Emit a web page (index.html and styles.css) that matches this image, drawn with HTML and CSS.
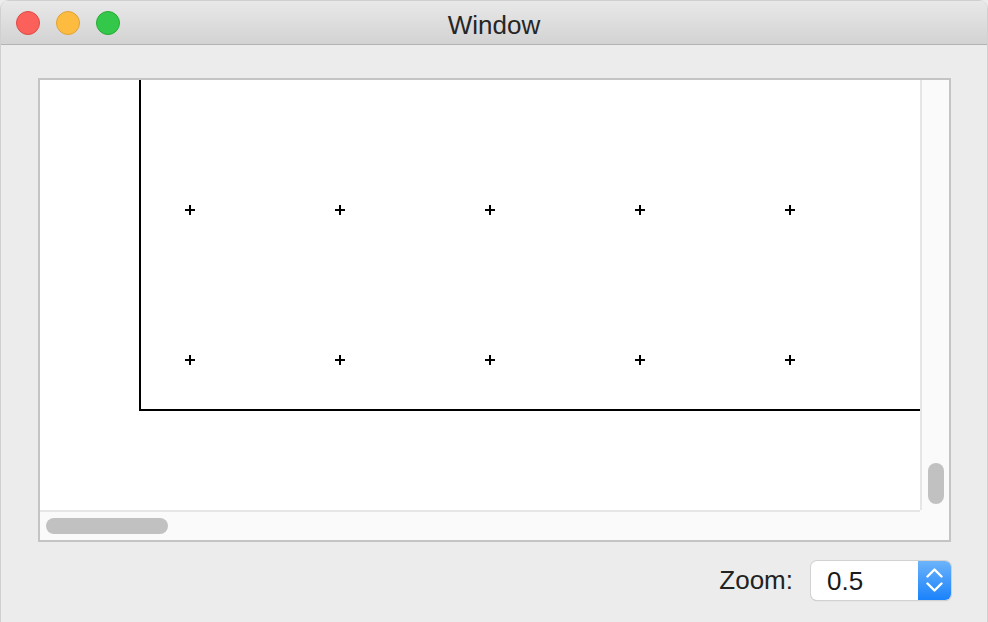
FILE: index.html
```html
<!DOCTYPE html>
<html>
<head>
<meta charset="utf-8">
<link rel="stylesheet" href="styles.css">
</head>
<body>
<div class="window">
  <div class="titlebar">
    <div class="lights">
      <span class="light red"></span>
      <span class="light yellow"></span>
      <span class="light green"></span>
    </div>
    <div class="title">Window</div>
    <div></div>
  </div>
  <div class="main">
    <div class="scrollview">
      <div class="doc">
        <svg width="880" height="430" viewBox="0 0 880 430">
          <g stroke="#000" stroke-width="2" fill="none">
            <path d="M100 0 V331"/>
            <path d="M99 330 H880"/>
          </g>
          <g stroke="#000" stroke-width="2">
            <path d="M145 130 H155 M150 125 V135"/>
            <path d="M295 130 H305 M300 125 V135"/>
            <path d="M445 130 H455 M450 125 V135"/>
            <path d="M595 130 H605 M600 125 V135"/>
            <path d="M745 130 H755 M750 125 V135"/>
            <path d="M145 280 H155 M150 275 V285"/>
            <path d="M295 280 H305 M300 275 V285"/>
            <path d="M445 280 H455 M450 275 V285"/>
            <path d="M595 280 H605 M600 275 V285"/>
            <path d="M745 280 H755 M750 275 V285"/>
          </g>
        </svg>
      </div>
      <div class="vtrack"><div class="vknob"></div></div>
      <div class="htrack"><div class="hknob"></div></div>
      <div class="corner"></div>
    </div>
    <div class="footer">
      <span class="label">Zoom:</span>
      <div class="combo">
        <span class="value">0.5</span>
        <span class="stepper">
          <svg width="17" height="26" viewBox="0 0 17 26">
            <g stroke="#fff" stroke-width="2.4" fill="none" stroke-linecap="round" stroke-linejoin="round">
              <path d="M1.5 9.5 L8.5 2.5 L15.5 9.5"/>
              <path d="M1.5 16.5 L8.5 23.5 L15.5 16.5"/>
            </g>
          </svg>
        </span>
      </div>
    </div>
  </div>
</div>
</body>
</html>
```

FILE: styles.css
```css
html, body {
  margin: 0;
  padding: 0;
  background: #ececec;
}
body {
  font-family: "Liberation Sans", Arial, sans-serif;
  width: 988px;
  height: 622px;
  overflow: hidden;
}
.window {
  width: 988px;
  height: 622px;
  background: #ececec;
  border-radius: 9px 9px 0 0;
  overflow: hidden;
  display: flex;
  flex-direction: column;
  box-sizing: border-box;
  border-left: 1px solid #d0d0d0;
  border-right: 1px solid #d0d0d0;
}
.titlebar {
  border-top: 1px solid #cfcfcf;
  border-bottom: 1px solid #b3b3b3;
  background: linear-gradient(#e8e8e8, #d3d3d3);
  display: grid;
  grid-template-columns: 1fr auto 1fr;
  align-items: center;
  box-sizing: border-box;
  flex: 0 0 45px;
  height: 45px;
}
.lights {
  display: flex;
  gap: 16px;
  padding-left: 15px;
}
.light {
  width: 22px;
  height: 22px;
  border-radius: 50%;
  border: 1px solid;
}
.red { background: #fc605b; border-color: #de4a45; }
.yellow { background: #fdbc40; border-color: #dea236; }
.green { background: #34c84a; border-color: #27aa35; }
.title {
  font-size: 26px;
  color: #262626;
  line-height: 30px;
  margin-top: 4px;
}
.main {
  flex: 1;
  padding: 33px 36px 0 37px;
  display: flex;
  flex-direction: column;
}
.scrollview {
  height: 464px;
  box-sizing: border-box;
  border: 2px solid #c4c4c4;
  display: grid;
  grid-template-columns: 880px 29px;
  grid-template-rows: 430px 30px;
  background: #fafafa;
}
.doc {
  background: #fff;
  overflow: hidden;
}
.doc svg { display: block; }
.vtrack {
  background: #fafafa;
  border-left: 2px solid #e6e6e6;
  padding: 383px 0 0 6px;
}
.vknob {
  width: 16px;
  height: 41px;
  border-radius: 8px;
  background: #c1c1c1;
}
.htrack {
  background: #fafafa;
  border-top: 2px solid #e6e6e6;
  padding: 6px 0 0 6px;
}
.hknob {
  width: 122px;
  height: 16px;
  border-radius: 8px;
  background: #c1c1c1;
}
.corner {
  background: #fafafa;
}
.footer {
  margin-top: 18px;
  display: flex;
  justify-content: flex-end;
  align-items: center;
  gap: 18px;
}
.label {
  font-size: 26px;
  color: #222;
  line-height: 39px;
  padding-top: 1px;
}
.combo {
  display: flex;
  height: 39px;
  width: 140px;
  border-radius: 6px;
  background: #fff;
  box-shadow: 0 0 0 1px #d2d2d2, 0 1px 1px rgba(0,0,0,0.25);
  overflow: hidden;
}
.value {
  flex: 1;
  font-size: 26px;
  color: #1a1a1a;
  line-height: 39px;
  padding-left: 16px;
  padding-top: 1px;
}
.stepper {
  width: 33px;
  background: linear-gradient(#6cb3fa, #1a82fb);
  display: flex;
  align-items: center;
  justify-content: center;
}
.stepper svg { display: block; }
```
